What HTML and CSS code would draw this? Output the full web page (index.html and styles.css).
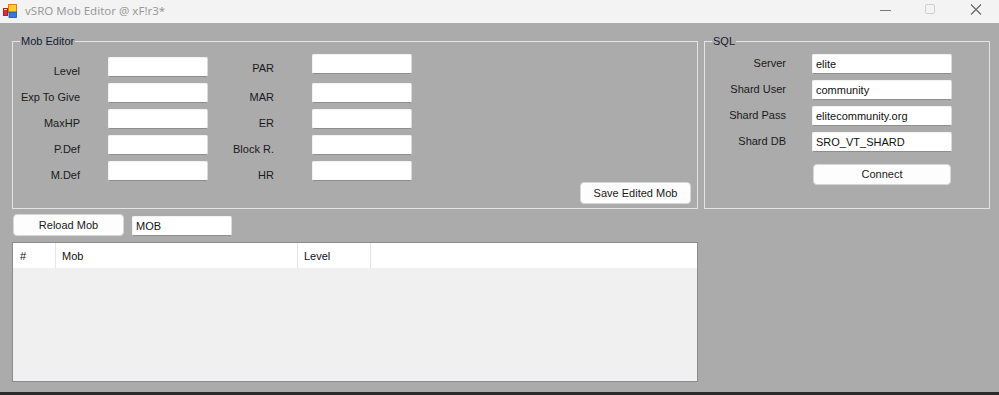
FILE: index.html
```html
<!DOCTYPE html>
<html>
<head>
<meta charset="utf-8">
<link rel="stylesheet" href="styles.css">
</head>
<body>
<div class="window">
  <div class="titlebar">
    <svg class="app-icon" width="16" height="16" viewBox="0 0 16 16">
      <rect x="0.5" y="4.5" width="4" height="7" fill="#d8d8d8" stroke="#b02020"/>
      <rect x="1" y="6" width="3" height="5" fill="#e03030"/>
      <rect x="5.5" y="0.5" width="8" height="8" fill="#f8d030" stroke="#e07810"/>
      <rect x="6" y="8" width="7.5" height="5.5" fill="#3a78d8" stroke="#1c50a8" stroke-width="0.8"/>
    </svg>
    <span class="title">vSRO Mob Editor @ xF!r3*</span>
    <div class="caption-buttons">
      <svg class="cap" width="46" height="23" viewBox="0 0 46 23"><line x1="19" y1="10.5" x2="30" y2="10.5" stroke="#7a7a7a" stroke-width="1"/></svg>
      <svg class="cap" width="46" height="23" viewBox="0 0 46 23"><rect x="18.5" y="4.5" width="9" height="9" rx="1.5" fill="none" stroke="#d0d0d0" stroke-width="1"/></svg>
      <svg class="cap" width="46" height="23" viewBox="0 0 46 23"><path d="M18 4.5 L28 14.5 M28 4.5 L18 14.5" stroke="#666" stroke-width="1.1" fill="none"/></svg>
    </div>
  </div>
  <div class="client">
    <div class="top-row">
      <fieldset class="group group-mob">
        <legend>Mob Editor</legend>
        <div class="mob-body">
          <div class="mob-grid">
            <label class="lbl lbl-a shift">Level</label>
            <div class="tb shift"></div>
            <label class="lbl lbl-b">PAR</label>
            <div class="tb"></div>

            <label class="lbl lbl-a">Exp To Give</label>
            <div class="tb"></div>
            <label class="lbl lbl-b">MAR</label>
            <div class="tb"></div>

            <label class="lbl lbl-a">MaxHP</label>
            <div class="tb"></div>
            <label class="lbl lbl-b">ER</label>
            <div class="tb"></div>

            <label class="lbl lbl-a">P.Def</label>
            <div class="tb"></div>
            <label class="lbl lbl-b">Block R.</label>
            <div class="tb"></div>

            <label class="lbl lbl-a">M.Def</label>
            <div class="tb"></div>
            <label class="lbl lbl-b">HR</label>
            <div class="tb"></div>
          </div>
          <button class="btn btn-save">Save Edited Mob</button>
        </div>
      </fieldset>
      <fieldset class="group group-sql">
        <legend>SQL</legend>
        <div class="sql-grid">
          <label class="lbl lbl-sql">Server</label>
          <div class="tb tb-sql">elite</div>
          <label class="lbl lbl-sql">Shard User</label>
          <div class="tb tb-sql">community</div>
          <label class="lbl lbl-sql">Shard Pass</label>
          <div class="tb tb-sql">elitecommunity.org</div>
          <label class="lbl lbl-sql">Shard DB</label>
          <div class="tb tb-sql">SRO_VT_SHARD</div>
          <span></span>
          <button class="btn btn-connect">Connect</button>
        </div>
      </fieldset>
    </div>
    <div class="toolbar">
      <button class="btn btn-reload">Reload Mob</button>
      <div class="tb tb-mob">MOB</div>
    </div>
    <div class="listview">
      <div class="lv-header">
        <div class="lv-col col-num">#</div>
        <div class="lv-col col-mob">Mob</div>
        <div class="lv-col col-level">Level</div>
      </div>
    </div>
  </div>
  <div class="bottom-edge"></div>
</div>
</body>
</html>
```

FILE: styles.css
```css
* { box-sizing: border-box; }
html, body { margin: 0; padding: 0; }
body {
  width: 999px;
  height: 395px;
  overflow: hidden;
  font-family: "Liberation Sans", Arial, sans-serif;
  font-size: 11px;
  color: #1a1a1a;
  background: #ababab;
}
.window { width: 999px; height: 395px; display: flex; flex-direction: column; }

.titlebar {
  height: 23px;
  background: #f3f3f3;
  display: flex;
  align-items: center;
  padding-left: 3px;
}
.app-icon { margin-top: 1px; }
.title {
  margin-left: 6px;
  font-family: "Noto Sans", "Open Sans", sans-serif;
  font-size: 11.5px;
  color: #9a9a9a;
  line-height: 14px;
  margin-top: -1px;
}
.caption-buttons { margin-left: auto; display: flex; }
.cap { display: block; }

.client {
  height: 369px;
  background: #ababab;
  padding: 12px 0 0 12px;
}
.top-row { display: flex; gap: 6px; align-items: flex-start; }

.group {
  margin: 0;
  padding: 0;
  border: 1px solid #e4e4e4;
  min-width: 0;
}
.group legend {
  font-size: 11px;
  line-height: 13px;
  padding: 0 1px;
  margin-left: 7px;
  color: #151a30;
}
.group-mob { width: 686px; }
.group-sql { width: 286px; }

.mob-body {
  height: 160px;
  display: flex;
  justify-content: space-between;
}
.mob-grid {
  margin-top: 6px;
  display: grid;
  grid-template-columns: 95px 100px 104px 100px;
  grid-template-rows: 29px 26px 26px 26px 26px;
  align-items: start;
}
.lbl {
  display: block;
  text-align: right;
  line-height: 13px;
  white-space: nowrap;
  color: #1a1a1a;
}
.lbl-a { padding: 8px 28px 0 0; }
.lbl-b { padding: 8px 38px 0 0; }
.shift { margin-top: 3px; }

.tb {
  height: 20px;
  background: #fff;
  border: 1px solid #f2f2f2;
  border-bottom-color: #8e8e8e;
  border-right-color: #dadada;
  border-radius: 2px;
  padding: 0 3px;
  line-height: 18px;
  font-size: 11px;
  color: #111;
  white-space: nowrap;
  overflow: hidden;
}

.btn {
  font-family: "Liberation Sans", Arial, sans-serif;
  font-size: 11px;
  color: #1a1a1a;
  background: #fdfdfd;
  border: 1px solid #d6d6d6;
  border-radius: 4px;
  padding: 0;
  line-height: 13px;
  text-align: center;
}
.btn-save {
  align-self: flex-end;
  width: 111px;
  height: 22px;
  margin: 0 6px 4px 0;
}

.sql-grid {
  margin-top: 6px;
  height: 154px;
  display: grid;
  grid-template-columns: 107px 140px;
  grid-template-rows: 26px 26px 26px 26px 26px;
  align-content: start;
  align-items: start;
}
.lbl-sql { padding: 3px 26px 0 0; }
.btn-connect {
  width: 138px;
  height: 21px;
  margin: 6px 0 0 1px;
}

.toolbar {
  display: flex;
  align-items: flex-start;
  margin-top: 5px;
  gap: 8px;
}
.btn-reload { width: 111px; height: 22px; margin-left: 1px; }
.tb-mob { width: 100px; margin-top: 2px; }

.listview {
  margin-top: 6px;
  width: 686px;
  height: 140px;
  border: 1px solid #8a8a90;
  background: #f0f0f0;
}
.lv-header {
  height: 25px;
  background: #fff;
  display: flex;
}
.lv-col {
  height: 25px;
  border-right: 1px solid #e5e5e5;
  padding: 7px 0 0 6px;
  line-height: 13px;
  color: #111;
}
.col-num { width: 43px; padding-left: 7px; }
.col-mob { width: 242px; }
.col-level { width: 73px; }

.bottom-edge { height: 3px; background: #2b2b2b; }
```
